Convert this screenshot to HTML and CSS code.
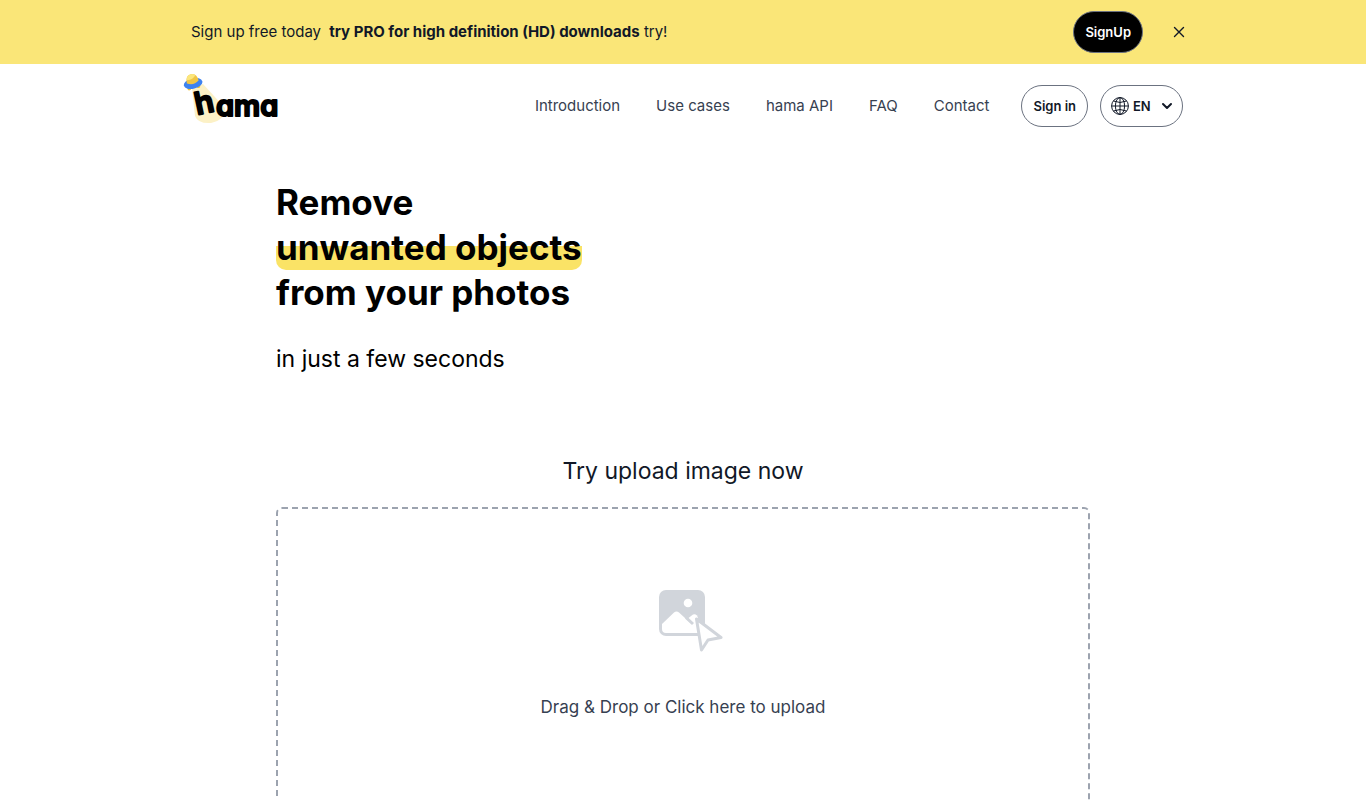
FILE: index.html
```
<!DOCTYPE html>
<html lang="en">
<head>
    <meta charset="UTF-8">
    <meta name="viewport" content="width=device-width, initial-scale=1.0">
    <title>hama - Remove unwanted objects</title>
    <link rel="stylesheet" href="styles.css">
</head>
<body>
    <!-- Promo banner -->
    <div class="banner">
        <div class="banner-inner">
            <p class="banner-text">Sign up free today <strong>try PRO for high definition (HD) downloads</strong> try!</p>
            <button type="button" class="pill pill-dark">SignUp</button>
            <button type="button" class="banner-close" aria-label="Close">
                <svg width="12" height="12" viewBox="0 0 12 12" fill="none" stroke="currentColor" stroke-width="1.4" stroke-linecap="round">
                    <path d="M1.5 1.5l9 9M10.5 1.5l-9 9"/>
                </svg>
            </button>
        </div>
    </div>

    <!-- Navigation -->
    <header class="header">
        <a class="logo" href="#" aria-label="hama">
            <svg width="100" height="52" viewBox="0 0 100 52">
                <path d="M9 14L20 10L42 34Q42 46 28 49Q15 50 12 42Z" fill="#fcf1c6"/>
                <g transform="rotate(-14 10 9)">
                    <circle cx="5" cy="13.5" r="1.8" fill="#f2c230"/>
                    <circle cx="14.500" cy="13.5" r="1.8" fill="#f2c230"/>
                    <ellipse cx="10" cy="9.500" rx="9.5" ry="5.200" fill="#3d82f0"/>
                    <path d="M4 8Q4 0 10 0Q16 0 16 8Q10 12 4 8Z" fill="#f0c544"/>
                    <path d="M5 5Q5 0 10 0Q13 0 14 2Q11 6 5 5Z" fill="#fbe67c"/>
                </g>
                <text class="logo-h" transform="translate(14 41) rotate(-12)">h</text>
                <text class="logo-text" x="33" y="42">ama</text>
            </svg>
        </a>
        <nav class="nav">
            <a href="#introduction">Introduction</a>
            <a href="#use-cases">Use cases</a>
            <a href="#api">hama API</a>
            <a href="#faq">FAQ</a>
            <a href="#contact">Contact</a>
        </nav>
        <div class="actions">
            <button type="button" class="pill">Sign in</button>
            <label class="pill language">
                <svg width="18" height="18" viewBox="0 0 18 18" fill="none" stroke="currentColor" stroke-width="1">
                    <circle cx="9" cy="9" r="8.4"/>
                    <ellipse cx="9" cy="9" rx="4.6" ry="8.4"/>
                    <path d="M9 .6v16.8M.6 9h16.8M2.5 4Q9 7 15.5 4M2.5 14Q9 11 15.5 14"/>
                </svg>
                <select aria-label="Language">
                    <option>EN</option>
                    <option>KO</option>
                    <option>JA</option>
                </select>
                <svg width="14" height="8" viewBox="-1 0 14 8" fill="none" stroke="currentColor" stroke-width="2" stroke-linecap="round" stroke-linejoin="round">
                    <path d="M3 2l4 4 4-4"/>
                </svg>
            </label>
        </div>
    </header>

    <main class="main">
        <h1 class="title">Remove<br><span class="highlight">unwanted objects</span><br>from your photos</h1>
        <p class="subtitle">in just a few seconds</p>

        <!-- Upload area -->
        <h2 class="upload-title">Try upload image now</h2>
        <label class="dropzone">
            <input type="file" accept="image/*" class="file-input">
            <svg width="80" height="64" viewBox="-8 0 80 64">
                <g transform="translate(7 -1)">
                    <rect x="1" y="2" width="46" height="46" rx="7" fill="#d1d5db"/>
                    <circle cx="30" cy="15" r="4.3" fill="#fff"/>
                    <path d="M4 36L16 24.5Q18.500 22.500 21 24.500L33 35.500L36 38L38 45H8Q4 45 4 41Z" fill="#fff"/>
                    <path d="M30.500 30L35 26.500Q37 25.500 39 27.500L40 30L42 45H36Z" fill="#fff"/>
                    <path d="M28 29.500L35 36" stroke="#d1d5db" stroke-width="3"/>
                    <path d="M38.500 31L63 49.500L50 52L43.500 62Z" fill="#fff" stroke="#d1d5db" stroke-width="3" stroke-linejoin="round"/>
                </g>
            </svg>
            <span>Drag &amp; Drop or Click here to upload</span>
        </label>
    </main>
</body>
</html>
```

FILE: styles.css
```
* {
    box-sizing: border-box;
}

body {
    margin: 0;
    font-family: Inter, sans-serif;
    color: #111827;
    background: #fff;
}

a {
    color: inherit;
    text-decoration: none;
}

/* Promo banner */
.banner {
    background: #fae678;
}

.banner-inner {
    display: flex;
    align-items: center;
    max-width: 1000px;
    height: 64px;
    margin: 0 auto;
    padding-left: 8px;
}

.banner-text {
    flex: 1;
    margin: 0;
    padding-bottom: 2px;
    font-size: 15px;
    font-weight: 400;
}

.banner-text strong {
    margin-left: 4px;
    font-weight: 700;
}

.banner-close {
    display: flex;
    margin-left: 26px;
    margin-right: -6px;
    padding: 4px;
    border: none;
    background: none;
    color: #111827;
    cursor: pointer;
}

/* Rounded buttons */
.pill {
    display: flex;
    align-items: center;
    height: 42px;
    padding: 0 11px;
    border: 1px solid #6b7280;
    border-radius: 21px;
    background: #fff;
    color: #111827;
    font-family: inherit;
    font-size: 13px;
    font-weight: 600;
    cursor: pointer;
}

.pill-dark {
    background: #000;
    color: #fff;
}

/* Header */
.header {
    display: flex;
    align-items: center;
    max-width: 1000px;
    height: 84px;
    margin: 0 auto;
}

.logo {
    display: flex;
    margin-right: auto;
    padding-bottom: 12px;
}

.logo-h,
.logo-text {
    font-weight: 600;
    font-feature-settings: "cv11";
    fill: #000;
    stroke: #000;
    stroke-width: 2px;
    stroke-linejoin: round;
}

.logo-h {
    font-size: 31px;
}

.logo-text {
    font-size: 29px;
}

.nav {
    display: flex;
    gap: 36px;
    margin-right: 32px;
    padding-bottom: 2px;
    color: #374151;
    font-size: 15px;
    font-weight: 400;
}

.actions {
    display: flex;
    gap: 12px;
}

.language {
    padding: 0 9px 0 10px;
}

.language svg {
    flex: none;
}

.language select {
    width: 26px;
    margin: 0 0 0 4px;
    padding: 0;
    border: none;
    appearance: none;
    background: none;
    color: inherit;
    font: inherit;
}

/* Main content */
.main {
    max-width: 814px;
    margin: 0 auto;
    padding-top: 32px;
}

.title {
    margin: 0;
    color: #000;
    font-size: 35px;
    font-weight: 700;
    line-height: 45px;
}

.highlight {
    padding-bottom: 2px;
    border-radius: 10px;
    background: linear-gradient(transparent 46%, #fae366 46%);
}

.subtitle {
    margin: 28px 0 0;
    color: #000;
    font-size: 23px;
    font-weight: 400;
    line-height: 32px;
}

.upload-title {
    margin: 80px 0 20px;
    font-size: 23px;
    font-weight: 400;
    line-height: 32px;
    text-align: center;
}

.dropzone {
    display: flex;
    flex-direction: column;
    align-items: center;
    gap: 40px;
    min-height: 320px;
    padding: 80px 16px;
    border: 2px dashed #9ca3af;
    border-radius: 6px;
    color: #374151;
    font-size: 17px;
    font-weight: 400;
    line-height: 28px;
    cursor: pointer;
}

.file-input {
    display: none;
}
```
